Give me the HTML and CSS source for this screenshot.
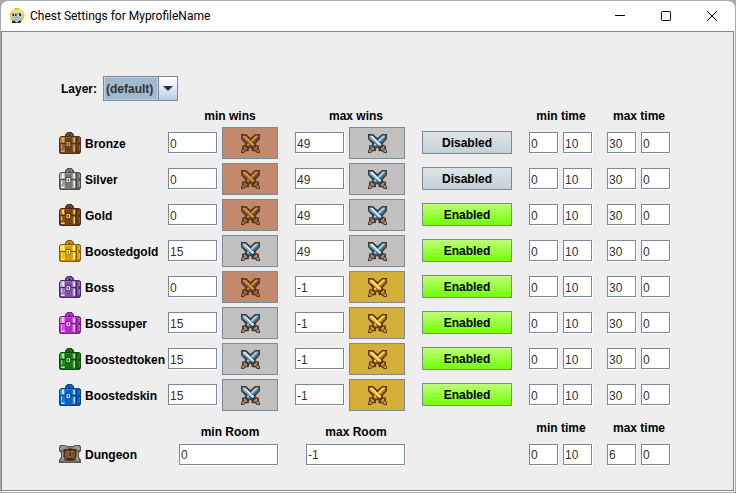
FILE: index.html
```
<!DOCTYPE html>
<html lang="en">
<head>
<meta charset="utf-8">
<meta name="viewport" content="width=device-width, initial-scale=1">
<title>Chest Settings for MyprofileName</title>
<link rel="stylesheet" href="styles.css">
<script src="app.js" defer></script>
</head>
<body>
<svg class="defs" aria-hidden="true">
  <symbol id="chest" viewBox="0 0 22 22">
    <path class="line" d="M6 4V2.500L8.500 0h4L15 2.500V4h5l2 1.500V20l-1.500 2H1.500L0 20.500V6l2-2z"/>
    <path class="mid" d="M7.500 4V3l1.500-1.500h3L13.500 3v1z"/>
    <path class="line" d="M9 2.500h3V4H9z"/>
    <path class="light" d="M2 5h14.500v6H1V6z"/>
    <path class="mid" d="M1.500 12h15v8.500H2l-.5-.5z"/>
    <path class="dark" d="M6 5h7.500v6H6zM6 12h7.500v8H6zM18 5h2v15.500h-2z"/>
    <path class="shine" d="M3 5.500h2V10H3zM14.500 6H16v4h-1.500zM2 18.500h3.500V20H2zM14.500 13H16v6.500h-1.500zM2 12.500h1v4H2z"/>
    <path class="mid" d="M20 6h1v4h-1zM20 13h1v6h-1zM7 5h5v1H7z"/>
    <path class="line" d="M7 9h4l1 1.500v3L11 15H7.500L6.500 13.500v-3z"/>
    <path class="shine" d="M8 10h2.500l.7 1v2.200l-.8 1H8.200l-.8-1V11z"/>
    <path class="line" d="M8.700 11H10v2.300H8.700z"/>
  </symbol>
  <symbol id="swords" viewBox="0 0 19 19">
    <path class="line" d="M0 0h5l4.500 4L14 0h5v5l-4.500 5 1.500 1.500h2v4l1 1V19h-3l-1.500-1.500-4-.5v-2L9.500 13.500 8 15v2l-4 .5L3 19H0v-2.500l1-1v-4h2L4.500 10 0 5z"/>
    <path class="dark" d="M17.500 1.500V4.500L8 13.500 5.500 11 14.500 1.500z"/>
    <path class="mid" d="M17.500 1.500L7 12 5.500 10.500l9-9z"/>
    <path class="light" d="M15 2h2l-2 2-8 7.500-1-1z"/>
    <path class="line" d="M3.500 1L15 11l-3 3L2 4.500z"/>
    <path class="mid" d="M1.500 1.500h3l9 9-2 2-10-8z"/>
    <path class="shine" d="M2 2h2l9 8.500-1 1z"/>
    <path class="grip" d="M2.500 12.500H4l2 2V16H5l-2-1.500zM1 16.500l2-1.500 1 1-1.500 2H1zM16.500 12.500H15l-2 2V16h1l2-1.500zM18 16.500L16 15l-1 1 1.500 2H18z"/>
  </symbol>
</svg>
<div class="window">
  <header class="titlebar">
    <svg class="logo" viewBox="0 0 16 16" aria-hidden="true">
      <path fill="#f5bd32" d="M6 0h4l1 1.500 3 2 1.500 4-1 4L11 14H5l-3.500-2.500-1-4 1.500-4 3-2z"/>
      <path fill="#ffe97c" d="M6 2h4l3 2 1 3-1 4H3L2 7l1-3z"/>
      <path fill="#a9c6c2" d="M5 4h6l2 2.500v4L11 13H5l-2-2.500v-4z"/>
      <path fill="#20292b" d="M3.500 5.500H5V8H3.500zM6 6h1.500v2H6zM10 5.500h2V8h-2zM3 13l2.500-.5 1 1.500H9l1-1.500 2.500.5-1 2H9l-1-.5-1 .5H3z"/>
      <path fill="#fff" d="M5 5.500h1v1H5zM9 7h1v1H9z"/>
      <path fill="#d9963e" d="M7 9h2v1H7z"/>
    </svg>
    <h1>Chest Settings for MyprofileName</h1>
    <button class="caption" type="button" aria-label="Minimize"><svg viewBox="0 0 12 12"><path d="M1 5.500h10"/></svg></button>
    <button class="caption" type="button" aria-label="Maximize"><svg viewBox="0 0 12 12"><rect x="1.500" y="1.500" width="9" height="9" rx="1"/></svg></button>
    <button class="caption" type="button" aria-label="Close"><svg viewBox="0 0 12 12"><path d="M1 1l10 10M11 1L1 11"/></svg></button>
  </header>
  <main>
    <div class="layer">
      <label for="layer">Layer:</label>
      <span class="combo"><select id="layer"><option>(default)</option></select><span class="arrow"></span></span>
    </div>
    <div class="row heads">
      <span class="wins-head min">min wins</span><span class="wins-head max">max wins</span>
      <span class="time-head min">min time</span><span class="time-head max">max time</span>
    </div>
    <div id="chests"></div>
    <div class="row heads dungeon-heads">
      <span class="wins-head min">min Room</span><span class="wins-head max">max Room</span>
      <span class="time-head min">min time</span><span class="time-head max">max time</span>
    </div>
    <div class="row dungeon">
      <span class="name">
        <svg class="icon" viewBox="0 0 22 22" aria-hidden="true">
          <path fill="#5b5650" d="M1 2h5l2 1h6l2-1h5l1 2v4l-2 2v4l2 3v3H0v-3l2-3v-4L0 8V4z"/>
          <path fill="#9d9993" d="M2 3h4l2 1.500h6L16 3h4l1 2v2H1V5zM3 9h3v6l-2 3H1.500L3 15zM16 9h3v6l1.500 3H18l-2-3z"/>
          <path fill="#77716a" d="M2 7h18l-2 2H4zM4 18h14l1 1H3z"/>
          <path fill="#4b2a14" d="M4.500 6H8l3-1 3 1h3.500v8l-3 3-3.500 1-3.500-1-3-3z"/>
          <path fill="#8a5127" d="M6 8l3-1v8l-1 1-2-2zM13 7l3 1v6l-2 2-1-1z"/>
          <path fill="#75665a" d="M9 8h4v6l-1 1h-2l-1-1z"/>
          <path fill="#3e2c22" d="M10.300 9.500H12V13h-1.700z"/>
        </svg><span>Dungeon</span>
      </span>
      <input class="room room-min" aria-label="Dungeon min room" value="0">
      <input class="room room-max" aria-label="Dungeon max room" value="-1">
      <input class="t1" aria-label="Dungeon min time, from" value="0">
      <input class="t2" aria-label="Dungeon min time, to" value="10">
      <input class="t3" aria-label="Dungeon max time, from" value="6">
      <input class="t4" aria-label="Dungeon max time, to" value="0">
    </div>
  </main>
</div>
</body>
</html>
```
FILE: app.js
```
const chests = [
  ["Bronze", 0, "bronze", 49, "silver", false],
  ["Silver", 0, "bronze", 49, "silver", false],
  ["Gold", 0, "bronze", 49, "silver", true],
  ["Boostedgold", 15, "silver", 49, "silver", true],
  ["Boss", 0, "bronze", -1, "gold", true],
  ["Bosssuper", 15, "silver", -1, "gold", true],
  ["Boostedtoken", 15, "silver", -1, "gold", true],
  ["Boostedskin", 15, "silver", -1, "gold", true]
];
const field = (label, value) => `<input aria-label="${label}" value="${value}">`;
const league = (label, tier) =>
  `<button type="button" class="league ${tier}" aria-label="${label}"><svg aria-hidden="true"><use href="#swords"/></svg></button>`;

document.getElementById("chests").innerHTML = chests.map(([name, min, minTier, max, maxTier, on]) => `
  <div class="row chest">
    <span class="name"><svg class="icon chest-${name.toLowerCase()}" aria-hidden="true"><use href="#chest"/></svg><span>${name}</span></span>
    ${field(name + " min wins", min)}${league(name + " min league", minTier)}
    ${field(name + " max wins", max)}${league(name + " max league", maxTier)}
    <button type="button" class="toggle ${on ? "on" : "off"}">${on ? "Enabled" : "Disabled"}</button>
    ${field(name + " min time, from", 0)}${field(name + " min time, to", 10)}
    ${field(name + " max time, from", 30)}${field(name + " max time, to", 0)}
  </div>`).join("");
```
FILE: styles.css
```
* { box-sizing: border-box; }
body {
  margin: 0;
  background: #ababab;
  font: bold 12px/16px "Liberation Sans", Arial, sans-serif;
  color: #000;
}
.defs { display: none; }
.window {
  display: flex;
  flex-direction: column;
  min-height: 100vh;
  border: 1px solid #ababab;
  border-radius: 8px 8px 0 0;
  background: #fff;
}
.titlebar {
  display: flex;
  align-items: center;
  height: 30px;
  padding-left: 8px;
}
.logo { width: 16px; height: 16px; margin-right: 5px; }
h1 {
  flex: 1;
  margin: 0;
  font: 12px/16px Roboto, "Open Sans", sans-serif;
}
.caption {
  width: 46px;
  height: 30px;
  padding: 0;
  border: 0;
  background: none;
}
.caption svg {
  display: block;
  width: 12px;
  height: 12px;
  margin: 0 auto;
  fill: none;
  stroke: #000;
}
main {
  flex: 1;
  margin: 0 1px 1px 0;
  padding: 44px 0 24px 57px;
  border: 1px solid #7a8a99;
  background: #eee;
}
.layer { display: flex; align-items: center; gap: 6px; padding-left: 2px; }
.combo {
  display: flex;
  width: 75px;
  height: 25px;
  border: 1px solid #7a8a99;
}
select {
  flex: 1;
  min-width: 0;
  padding: 0 0 0 1px;
  border: 1px solid #b8cfe5;
  border-radius: 0;
  appearance: none;
  background: #a3b8cc;
  color: #333;
  font: inherit;
}
.arrow {
  display: grid;
  place-items: center;
  width: 19px;
  border-left: 1px solid #7a8a99;
  background: linear-gradient(#fff, #dde8f3 50%, #b8cfe5);
}
.arrow::before {
  content: "";
  border: 5px solid transparent;
  border-top-color: #333;
  border-bottom: 0;
}
.row {
  display: grid;
  grid-template-columns: 109px 50px 4px 56px 17px 50px 4px 56px 17px 90px 17px 30px 4px 30px 14px 30px 4px 30px;
  align-items: center;
}
.heads { height: 26px; padding-top: 4px; text-align: center; }
.wins-head.min { grid-column: 2 / 5; margin-left: 14px; }
.wins-head.max { grid-column: 6 / 9; margin-left: 12px; }
.time-head.min { grid-column: 12 / 15; }
.time-head.max { grid-column: 16 / 19; }
.chest { align-items: start; height: 32px; margin-bottom: 4px; }
.chest > :nth-child(1) { grid-column: 1; }
.chest > :nth-child(2) { grid-column: 2; }
.chest > :nth-child(3) { grid-column: 4; }
.chest > :nth-child(4) { grid-column: 6; }
.chest > :nth-child(5) { grid-column: 8; }
.chest > :nth-child(6) { grid-column: 10; }
.chest > :nth-child(7), .t1 { grid-column: 12; }
.chest > :nth-child(8), .t2 { grid-column: 14; }
.chest > :nth-child(9), .t3 { grid-column: 16; }
.chest > :nth-child(10), .t4 { grid-column: 18; }
.chest .name, .chest input { margin-top: 5px; }
.name { display: flex; align-items: center; gap: 4px; white-space: nowrap; }
.name span { padding-top: 2px; }
.icon { width: 22px; height: 22px; flex: none; }
input {
  width: calc(100% - 1px);
  height: 21px;
  padding: 2px 0 0 1px;
  border: 1px solid #7a8a99;
  border-radius: 0;
  box-shadow: 1px 1px 0 #fff;
  background: #fff;
  color: #333;
  font: 12px/16px "Liberation Sans", Arial, sans-serif;
}
.league {
  display: grid;
  place-items: center;
  height: 32px;
  padding: 0;
  border: 1px solid #7a8a99;
}
.league svg { width: 19px; height: 19px; }
.toggle {
  height: 23px;
  margin-top: 4px;
  padding: 0;
  border: 1px solid #7a8a99;
  color: #000;
  font: inherit;
}
.on { background: linear-gradient(#bdff73, #73ff08); }
.off { background: linear-gradient(#dde4e6, #c3d0d6); }
.dungeon-heads { align-items: start; height: 28px; padding-top: 5px; }
.dungeon-heads .wins-head { padding-top: 4px; }
.dungeon { height: 22px; }
.dungeon .room-min { grid-column: 2 / 5; justify-self: end; width: 99px; }
.dungeon .room-max { grid-column: 6 / 9; justify-self: end; width: 99px; }

.line { fill: var(--line); }
.dark { fill: var(--dark); }
.mid { fill: var(--mid); }
.light { fill: var(--light); }
.shine { fill: var(--shine); }
.grip { fill: var(--grip); }
.bronze { background: #c3896f; --line: #5a3620; --dark: #7d4b22; --mid: #a86a2c; --light: #d49a50; --shine: #dea45a; --grip: #a5713c; }
.silver { background: #c0c0c0; --line: #4b362c; --dark: #3d7fae; --mid: #63aedb; --light: #a8dcf3; --shine: #f4fbff; --grip: #a79482; }
.gold { background: #d4af37; --line: #5a381a; --dark: #c47d1d; --mid: #efb02a; --light: #ffda4d; --shine: #fff2a0; --grip: #d4a13a; }
.chest-bronze { --line: #4d3220; --dark: #65421f; --mid: #96622a; --light: #b27c34; --shine: #dba45e; }
.chest-silver { --line: #4f4a46; --dark: #747975; --mid: #9da49f; --light: #b9c0ba; --shine: #edf4ee; }
.chest-gold { --line: #4b2b18; --dark: #77451c; --mid: #8f551c; --light: #a8671f; --shine: #ffd340; }
.chest-boostedgold { --line: #8a5b0d; --dark: #d69d0c; --mid: #efb90e; --light: #ffd824; --shine: #fff5a0; }
.chest-boss { --line: #4b2766; --dark: #7b56a0; --mid: #9d78c2; --light: #bd9adc; --shine: #eddcff; }
.chest-bosssuper { --line: #7a2085; --dark: #b02ccc; --mid: #d94aea; --light: #ee70f8; --shine: #ffd2ff; }
.chest-boostedtoken { --line: #0f4a10; --dark: #176f1a; --mid: #238c22; --light: #39a832; --shine: #a9e58c; }
.chest-boostedskin { --line: #083f8f; --dark: #0b5fc6; --mid: #1478df; --light: #3096f1; --shine: #b5e5ff; }
```
